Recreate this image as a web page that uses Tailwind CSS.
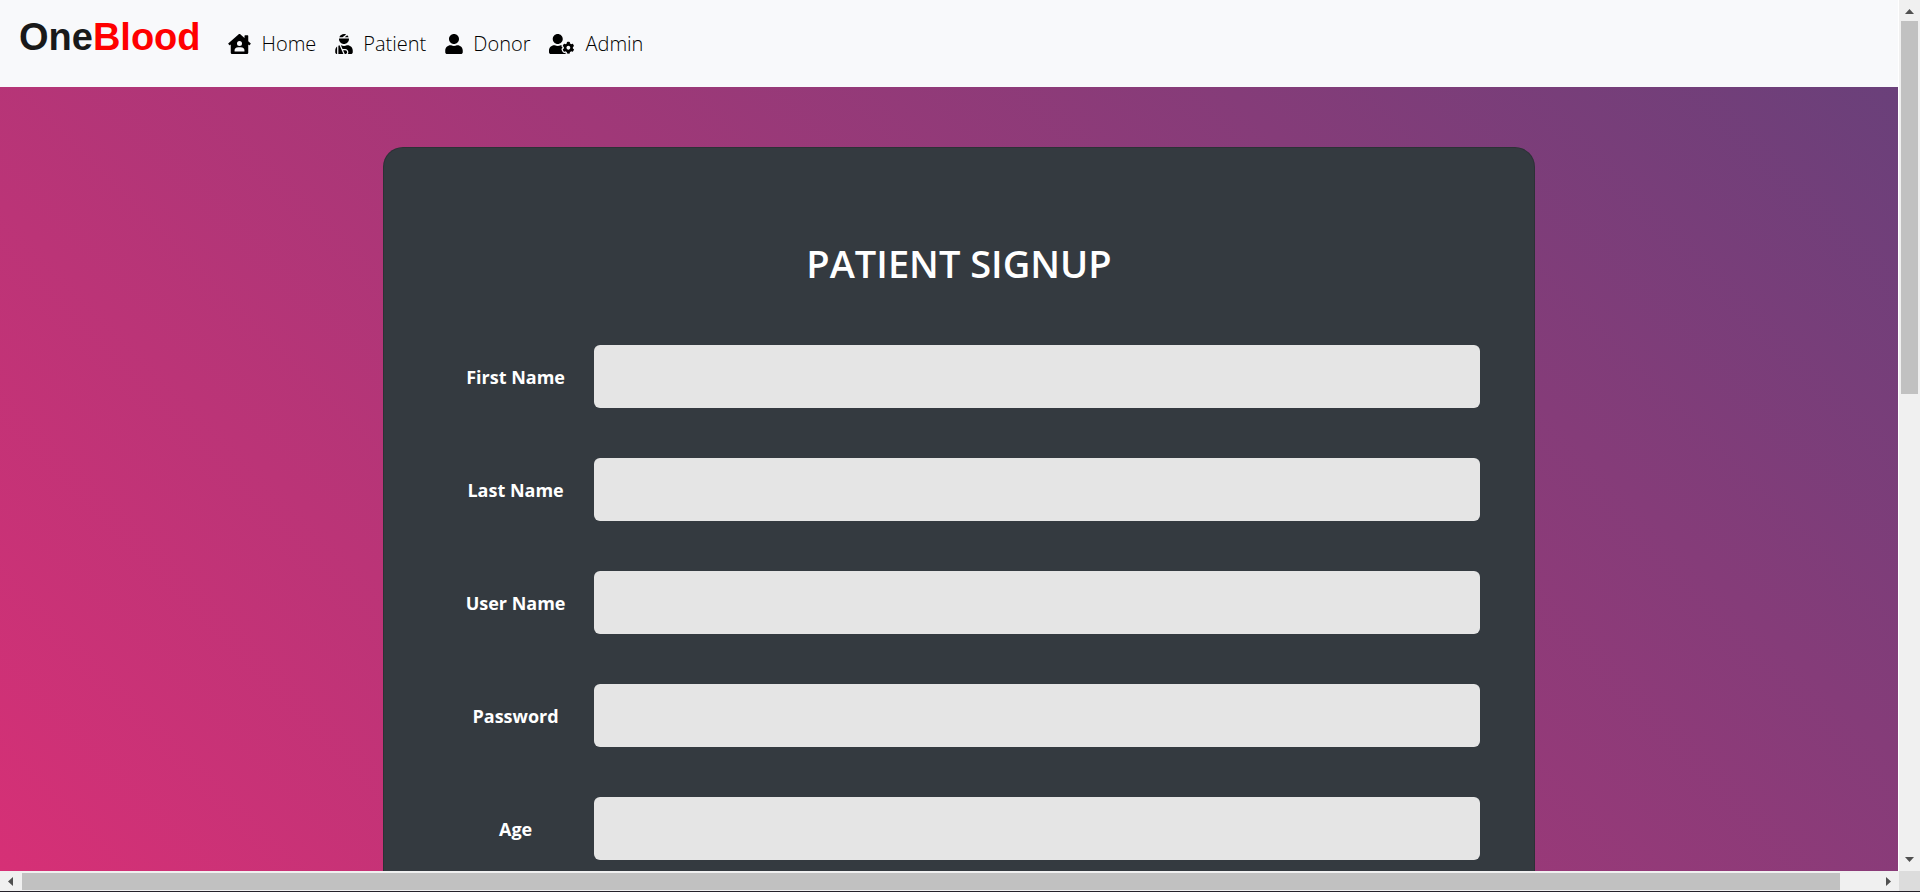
<!DOCTYPE html>
<html lang="en">
<head>
<meta charset="utf-8">
<title>OneBlood - Patient Signup</title>
<script src="https://cdn.jsdelivr.net/npm/@tailwindcss/browser@4"></script>
</head>
<body class="grid h-screen grid-cols-[minmax(0,1fr)_21px] grid-rows-[minmax(0,1fr)_20px_1px] overflow-hidden bg-white font-['Open_Sans','Noto_Sans',sans-serif]">
  <div class="mr-px flex flex-col overflow-hidden">
    <nav class="flex h-[87px] shrink-0 items-center bg-[#f8f9fb] pl-[19px] text-black">
      <a href="#" class="mb-[14px] mr-[27px] font-['Liberation_Sans',sans-serif] text-[38px] leading-none font-bold text-[#191919]">One<span class="text-[#ff0000]">Blood</span></a>
      <ul class="flex gap-[19px] text-xl font-light">
        <li><a href="#" class="flex items-center gap-[11px]">
          <svg class="h-5 w-[23px]" viewBox="0 0 576 512" fill="currentColor" aria-hidden="true"><path d="M570.69,236.27,512,184.44V48a16,16,0,0,0-16-16H432a16,16,0,0,0-16,16V99.67L314.78,10.3C308.5,4.61,296.53,0,288,0s-20.46,4.61-26.74,10.3l-256,226A18.27,18.27,0,0,0,0,248.2a18.64,18.64,0,0,0,4.09,10.71L25.5,282.7a21.14,21.14,0,0,0,12,5.3,21.67,21.67,0,0,0,10.69-4.11l15.9-14V480a32,32,0,0,0,32,32H480a32,32,0,0,0,32-32V269.88l15.91,14A21.94,21.94,0,0,0,538.63,288a20.89,20.89,0,0,0,11.87-5.31l21.41-23.81A21.64,21.64,0,0,0,576,248.19,21,21,0,0,0,570.69,236.27ZM288,176a64,64,0,1,1-64,64A64,64,0,0,1,288,176ZM400,448H176a16,16,0,0,1-16-16,96,96,0,0,1,96-96h64a96,96,0,0,1,96,96A16,16,0,0,1,400,448Z"/></svg>Home</a></li>
        <li><a href="#" class="flex items-center gap-[10px]">
          <svg class="h-5 w-[18px]" viewBox="0 0 448 512" fill="currentColor" aria-hidden="true"><path d="M277.37 11.98C261.08 4.47 243.11 0 224 0c-53.69 0-99.5 33.13-118.51 80h81.19l90.69-68.02zM342.51 80c-7.9-19.47-20.67-36.2-36.49-49.52L239.99 80h102.52zM224 256c70.69 0 128-57.31 128-128 0-5.48-.95-10.7-1.61-16H97.61c-.67 5.3-1.61 10.52-1.61 16 0 70.69 57.31 128 128 128zM80 299.7V512h128.26l-98.45-221.52A132.835 132.835 0 0 0 80 299.7zM0 464c0 26.51 21.49 48 48 48V320.24C18.88 344.89 0 381.26 0 422.4V464zm256-48h-55.38l42.67 96H256c26.47 0 48-21.53 48-48s-21.53-48-48-48zm57.6-128h-16.71c-22.24 10.18-46.88 16-72.89 16s-50.65-5.82-72.89-16h-7.37l42.67 96H256c44.11 0 80 35.89 80 80 0 18.08-6.26 34.59-16.41 48H400c26.51 0 48-21.49 48-48v-41.6c0-74.23-60.17-134.4-134.4-134.4z"/></svg>Patient</a></li>
        <li><a href="#" class="flex items-center gap-[10px]">
          <svg class="h-5 w-[18px]" viewBox="0 0 448 512" fill="currentColor" aria-hidden="true"><path d="M224 256c70.7 0 128-57.3 128-128S294.7 0 224 0 96 57.3 96 128s57.3 128 128 128zm89.6 32h-16.7c-22.2 10.2-46.9 16-72.9 16s-50.6-5.8-72.9-16h-16.7C60.2 288 0 348.2 0 422.4V464c0 26.5 21.5 48 48 48h352c26.5 0 48-21.5 48-48v-41.6c0-74.2-60.2-134.4-134.4-134.4z"/></svg>Donor</a></li>
        <li><a href="#" class="flex items-center gap-[11px]">
          <svg class="h-5 w-[25px]" viewBox="0 0 640 512" fill="currentColor" aria-hidden="true"><path d="M610.5 373.3c2.6-14.1 2.6-28.5 0-42.6l25.8-14.9c3-1.7 4.3-5.2 3.3-8.5-6.7-21.6-18.2-41.2-33.2-57.4-2.3-2.5-6-3.1-9-1.4l-25.8 14.9c-10.9-9.3-23.4-16.5-36.9-21.3v-29.8c0-3.4-2.4-6.4-5.7-7.1-22.3-5-45-4.8-66.2 0-3.3.7-5.7 3.7-5.7 7.1v29.8c-13.5 4.8-26 12-36.9 21.3l-25.8-14.9c-2.9-1.7-6.7-1.1-9 1.4-15 16.2-26.5 35.8-33.2 57.4-1 3.3.4 6.8 3.3 8.5l25.8 14.9c-2.6 14.1-2.6 28.5 0 42.6l-25.8 14.9c-3 1.7-4.3 5.2-3.3 8.5 6.7 21.6 18.2 41.1 33.2 57.4 2.3 2.5 6 3.1 9 1.4l25.8-14.9c10.9 9.3 23.4 16.5 36.9 21.3v29.8c0 3.4 2.4 6.4 5.7 7.1 22.3 5 45 4.8 66.2 0 3.3-.7 5.7-3.7 5.7-7.1v-29.8c13.5-4.8 26-12 36.9-21.3l25.8 14.9c2.9 1.7 6.7 1.1 9-1.4 15-16.2 26.5-35.8 33.2-57.4 1-3.3-.4-6.8-3.3-8.5l-25.8-14.9zM496 400.5c-26.8 0-48.5-21.8-48.5-48.5s21.8-48.5 48.5-48.5 48.5 21.8 48.5 48.5-21.7 48.5-48.5 48.5zM224 256c70.7 0 128-57.3 128-128S294.7 0 224 0 96 57.3 96 128s57.3 128 128 128zm201.2 226.5c-2.3-1.2-4.6-2.6-6.8-3.9l-7.9 4.6c-6 3.4-12.8 5.3-19.6 5.3-10.9 0-21.4-4.6-28.9-12.6-18.3-19.8-32.3-43.9-40.2-69.6-5.5-17.7 1.9-36.4 17.9-45.7l7.9-4.6c-.1-2.6-.1-5.2 0-7.8l-7.9-4.6c-16-9.2-23.4-28-17.9-45.7.9-2.9 2.2-5.8 3.2-8.7-3.8-.3-7.5-1.2-11.4-1.2h-16.7c-22.2 10.2-46.9 16-72.9 16s-50.6-5.8-72.9-16h-16.7C60.2 288 0 348.2 0 422.4V464c0 26.5 21.5 48 48 48h352c10.1 0 19.5-3.2 27.2-8.5-1.2-3.8-2-7.7-2-11.8v-9.2z"/></svg>Admin</a></li>
      </ul>
    </nav>
    <main class="min-h-0 flex-1 overflow-hidden bg-[linear-gradient(45deg,#d63076,#6a407a)] pt-[60px]">
      <div class="w-[calc(100%+20px)]">
        <form class="mx-auto w-[calc(60%+2px)] rounded-[20px] border border-black/15 bg-[#343a40] px-[54px] pt-[88px] pb-24">
          <h1 class="mb-[55px] text-center text-[38px] leading-[54px] font-semibold text-white">PATIENT SIGNUP</h1>
          <div class="flex flex-col gap-[50px] text-lg font-bold text-white">
            <div class="flex items-center"><label for="first" class="w-[156px] text-center">First Name</label><input id="first" type="text" class="h-[63px] min-w-0 flex-1 rounded-md bg-[#e5e5e5] px-4 text-black"></div>
            <div class="flex items-center"><label for="last" class="w-[156px] text-center">Last Name</label><input id="last" type="text" class="h-[63px] min-w-0 flex-1 rounded-md bg-[#e5e5e5] px-4 text-black"></div>
            <div class="flex items-center"><label for="user" class="w-[156px] text-center">User Name</label><input id="user" type="text" class="h-[63px] min-w-0 flex-1 rounded-md bg-[#e5e5e5] px-4 text-black"></div>
            <div class="flex items-center"><label for="pass" class="w-[156px] text-center">Password</label><input id="pass" type="password" class="h-[63px] min-w-0 flex-1 rounded-md bg-[#e5e5e5] px-4 text-black"></div>
            <div class="flex items-center"><label for="age" class="w-[156px] text-center">Age</label><input id="age" type="text" class="h-[63px] min-w-0 flex-1 rounded-md bg-[#e5e5e5] px-4 text-black"></div>
          </div>
        </form>
      </div>
    </main>
  </div>
  <!-- vertical scrollbar -->
  <div class="flex flex-col items-center bg-[#f0f0f0] text-[#505050]">
    <svg class="h-[21px] w-full shrink-0" viewBox="0 0 21 21" fill="currentColor" aria-hidden="true"><path d="M6 14 10.500 9 15 14z"/></svg>
    <div class="min-h-0 w-full flex-1 px-[2px]"><div class="h-[45%] w-[17px] bg-[#c1c1c1]"></div></div>
    <svg class="h-[21px] w-full shrink-0" viewBox="0 0 21 21" fill="currentColor" aria-hidden="true"><path d="M6 7 10.500 12 15 7z"/></svg>
  </div>
  <!-- horizontal scrollbar -->
  <div class="flex items-center bg-[#f0f0f0] text-[#505050]">
    <svg class="h-5 w-[22px] shrink-0" viewBox="0 0 22 20" fill="currentColor" aria-hidden="true"><path d="M13 6v9L8 10.500z"/></svg>
    <div class="min-w-0 flex-1 pt-px"><div class="h-[17px] w-[98%] bg-[#c1c1c1]"></div></div>
    <svg class="h-5 w-[22px] shrink-0" viewBox="0 0 22 20" fill="currentColor" aria-hidden="true"><path d="M9 6v9l5-4.500z"/></svg>
  </div>
  <div class="bg-[#dcdcdc]"></div>
  <div class="col-span-2 bg-[#25222a]"></div>
</body>
</html>
